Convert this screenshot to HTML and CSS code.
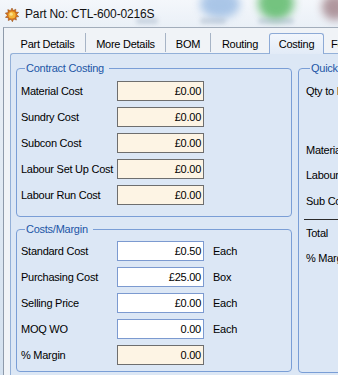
FILE: index.html
```html
<!DOCTYPE html>
<html>
<head>
<meta charset="utf-8">
<link rel="stylesheet" href="styles.css">
</head>
<body>
<div class="window">
  <div class="titlebar">
    <div class="glass blob-blue"></div>
    <div class="glass blob-green"></div>
    <div class="glass blob-dark"></div>
    <div class="glass blur-label l1"></div>
    <div class="glass blur-label l2"></div>
    <div class="glass blur-label l3"></div>
    <svg class="app-icon" width="14" height="14" viewBox="0 0 14 14">
      <polygon points="7,0 8.2,2.6 10.8,1.2 10.6,4.1 13.6,4.3 11.6,6.5 13.8,8.6 10.9,9.2 11.4,12.1 8.7,11 7.4,13.8 6,11.2 3.3,12.6 3.4,9.7 0.4,9.4 2.4,7.3 0.3,5.1 3.2,4.5 2.8,1.6 5.5,2.7" fill="#d9761c" stroke="#8a4310" stroke-width="0.5"/>
      <circle cx="7" cy="7" r="3.6" fill="#f3b63a"/>
      <circle cx="6.2" cy="6.2" r="1.6" fill="#fbe08a"/>
    </svg>
    <span class="title">Part No: CTL-600-0216S</span>
  </div>
  <div class="client">
    <div class="tabstrip">
      <div class="tab w1">Part Details</div>
      <div class="tab w2">More Details</div>
      <div class="tab w3">BOM</div>
      <div class="tab w4">Routing</div>
      <div class="tab active">Costing</div>
      <div class="tab w6">Forecast</div>
    </div>
    <div class="panel">
      <div class="left-col">
        <fieldset class="group contract">
          <legend>Contract Costing</legend>
          <div class="rows">
            <span class="lbl">Material Cost</span><div class="field ro">£0.00</div><span></span>
            <span class="lbl">Sundry Cost</span><div class="field ro">£0.00</div><span></span>
            <span class="lbl">Subcon Cost</span><div class="field ro">£0.00</div><span></span>
            <span class="lbl">Labour Set Up Cost</span><div class="field ro">£0.00</div><span></span>
            <span class="lbl">Labour Run Cost</span><div class="field ro">£0.00</div><span></span>
          </div>
        </fieldset>
        <fieldset class="group costs">
          <legend>Costs/Margin</legend>
          <div class="rows">
            <span class="lbl">Standard Cost</span><div class="field">£0.50</div><span class="unit">Each</span>
            <span class="lbl">Purchasing Cost</span><div class="field">£25.00</div><span class="unit">Box</span>
            <span class="lbl">Selling Price</span><div class="field">£0.00</div><span class="unit">Each</span>
            <span class="lbl">MOQ WO</span><div class="field">0.00</div><span class="unit">Each</span>
            <span class="lbl">% Margin</span><div class="field ro">0.00</div><span></span>
          </div>
        </fieldset>
      </div>
      <fieldset class="group quick">
        <legend>Quick Costing</legend>
        <div class="qrow q-qty">Qty to Make</div>
        <div class="qrow q-mat">Material Cost</div>
        <div class="qrow q-lab">Labour Cost</div>
        <div class="qrow q-sub">Sub Con Cost</div>
        <div class="qline"></div>
        <div class="qrow q-tot">Total</div>
        <div class="qrow q-mar">% Margin</div>
      </fieldset>
    </div>
  </div>
</div>
</body>
</html>
```

FILE: styles.css
```css
html, body {
  margin: 0;
  padding: 0;
}
body {
  width: 338px;
  height: 375px;
  overflow: hidden;
  font-family: "Liberation Sans", Arial, sans-serif;
  font-size: 11px;
  letter-spacing: -0.25px;
  color: #000;
}
.window {
  width: 338px;
  height: 375px;
  display: flex;
  flex-direction: column;
  overflow: hidden;
  background: linear-gradient(180deg, #eef2f7 0%, #e6edf5 30%, #dbe6f2 70%, #d4e1ef 100%);
}
.titlebar {
  position: relative;
  height: 27px;
  flex: 0 0 27px;
  display: flex;
  align-items: center;
  padding-left: 5px;
  overflow: hidden;
  background: linear-gradient(180deg, #f4f7fb 0%, #eaf0f7 100%);
}
.glass {
  position: absolute;
  border-radius: 50%;
  filter: blur(4px);
}
.blob-blue { left: 200px; top: -10px; width: 40px; height: 28px; background: #6f9fd8; opacity: 0.55; }
.blob-green { left: 258px; top: -14px; width: 36px; height: 34px; background: #3fae4c; opacity: 0.7; }
.blob-dark { left: 322px; top: -6px; width: 26px; height: 26px; background: #7a4a52; opacity: 0.55; }
.blur-label { top: 18px; height: 6px; background: #9fb0c4; opacity: 0.45; border-radius: 3px; filter: blur(2px); }
.l1 { left: 136px; width: 22px; }
.l2 { left: 200px; width: 26px; }
.l3 { left: 258px; width: 36px; }
.app-icon {
  position: relative;
  flex: 0 0 14px;
  margin-top: 2px;
}
.title {
  position: relative;
  margin-left: 6px;
  margin-top: 1px;
  font-size: 12px;
  letter-spacing: -0.15px;
  color: #111;
}
.client {
  flex: 1;
  margin-left: 3px;
  border-left: 1px solid #8e9aaa;
  border-top: 1px solid #a2adbb;
  background: #f0f3f7;
  display: flex;
  flex-direction: column;
  min-height: 0;
  min-width: 0;
}
.tabstrip {
  height: 25px;
  flex: 0 0 25px;
  display: flex;
  align-items: flex-end;
  padding-left: 6px;
  position: relative;
  z-index: 2;
}
.tab {
  flex: 0 0 auto;
  height: 19px;
  margin-bottom: 1px;
  display: flex;
  align-items: center;
  justify-content: center;
  border-right: 1px solid #a7b4c6;
  box-sizing: border-box;
  padding-top: 2px;
  white-space: nowrap;
}
.w1 { width: 76px; }
.w2 { width: 80px; }
.w3 { width: 45px; }
.w4 { width: 58px; border-right: none; }
.w6 { width: 60px; justify-content: flex-start; padding-left: 7px; border-right: none; }
.tab.active {
  width: 55px;
  height: 21px;
  margin-bottom: -1px;
  border: 1px solid #8daad6;
  border-bottom: none;
  border-radius: 3px 3px 0 0;
  background: linear-gradient(180deg, #f2f6fc 0%, #e2ebf7 100%);
  padding-top: 0;
}
.panel {
  flex: 1;
  margin-left: 6px;
  border-top: 1px solid #93b0d8;
  border-left: 1px solid #93b0d8;
  border-top-left-radius: 3px;
  background: #dce7f5;
  display: flex;
  align-items: stretch;
  padding: 8px 0 0 5px;
  gap: 6px;
  min-height: 0;
}
.left-col {
  display: flex;
  flex-direction: column;
  width: 276px;
  flex: 0 0 276px;
}
.group {
  margin: 0;
  border: 1px solid #7a9ed6;
  border-radius: 4px;
  padding: 6px 4px 11px 4px;
  min-width: 0;
}
.group legend {
  padding: 0 5px 0 1px;
  margin-left: 4px;
  line-height: 13px;
  color: #2256a6;
}
.costs {
  margin-top: 6px;
  padding-top: 5px;
  padding-bottom: 6px;
}
.rows {
  display: grid;
  grid-template-columns: 96px 87px 1fr;
  grid-auto-rows: 20px;
  row-gap: 6px;
  align-items: center;
}
.lbl {
  white-space: nowrap;
}
.field {
  height: 20px;
  box-sizing: border-box;
  border: 1px solid #7c9ad0;
  background: #fff;
  text-align: right;
  padding-right: 2px;
  line-height: 18px;
}
.field.ro {
  border-color: #6e6e6e;
  background: #fdf4e4;
}
.unit {
  padding-left: 9px;
}
.quick {
  flex: 0 0 150px;
  width: 150px;
  box-sizing: border-box;
  margin-bottom: 2px;
  padding: 6px 0 0 7px;
  display: flex;
  flex-direction: column;
}
.qrow {
  height: 20px;
  line-height: 20px;
  white-space: nowrap;
}
.q-qty { margin-top: 0; }
.q-mat { margin-top: 39px; }
.q-lab { margin-top: 5px; }
.q-sub { margin-top: 6px; }
.qline {
  margin-top: 8px;
  margin-left: -2px;
  height: 1px;
  background: #2a2a2a;
}
.q-tot { margin-top: 3px; }
.q-mar { margin-top: 5px; }
```
